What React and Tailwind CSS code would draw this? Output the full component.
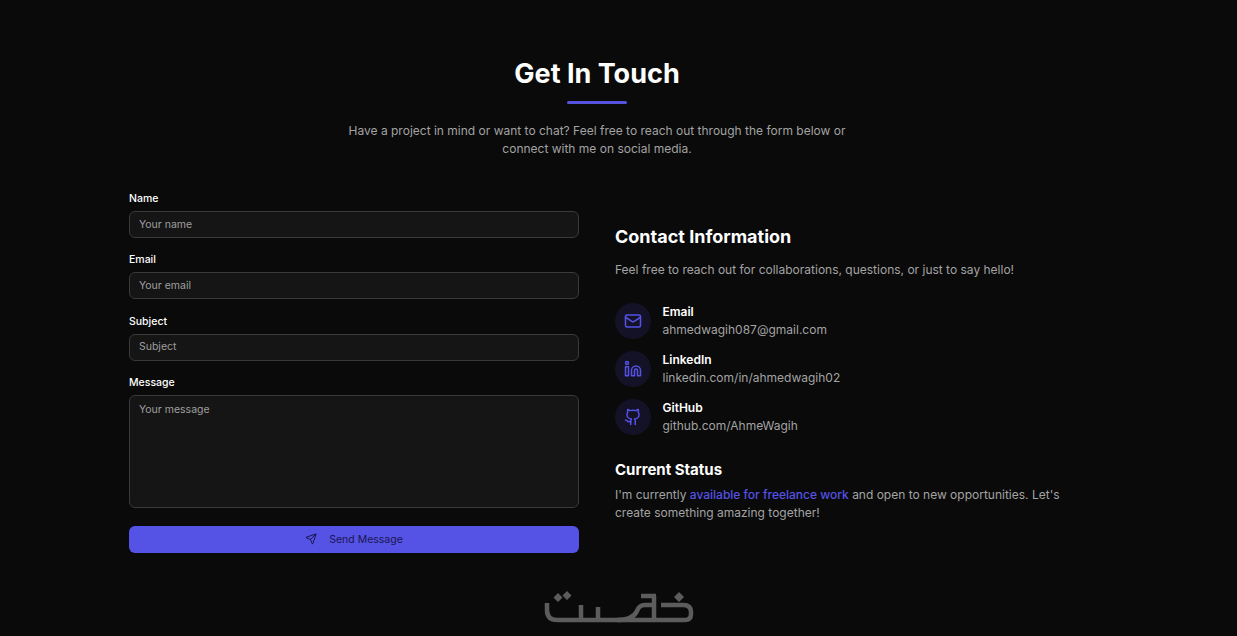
import React from 'react';
import { Mail, Linkedin, Github, Send } from 'lucide-react';

const fields = [
  { label: 'Name', placeholder: 'Your name' },
  { label: 'Email', placeholder: 'Your email' },
  { label: 'Subject', placeholder: 'Subject' },
];

const contacts = [
  { title: 'Email', value: 'ahmedwagih087@gmail.com', Icon: Mail },
  { title: 'LinkedIn', value: 'linkedin.com/in/ahmedwagih02', Icon: Linkedin },
  { title: 'GitHub', value: 'github.com/AhmeWagih', Icon: Github },
];

// khamsat watermark
const Logo = () => (
  <svg width="152" height="34" viewBox="542 590 152 34" fill="none" stroke="#5c5c5c" strokeWidth="4.5">
    <path d="M546 603v7q0 10 10 10H684q6 0 6-6v-2q0-7-8-7H660" />
    <path d="M580 605v15M597 607v13" />
    <path d="M616 620q16 0 20-9q2-6 8-6h9" />
    <path d="M640 596h15M653 596v24" />
    <path d="M678 592l5 5-5 5-5-5z M557 593l4.500 4.500-4.500 4.500-4.500-4.500z M566 591l4.500 4.500-4.500 4.500-4.500-4.500z" fill="#5c5c5c" stroke="none" />
  </svg>
);

export default function App() {
  return (
    <div className="h-[636px] overflow-hidden bg-[#0a0a0a] font-['Inter',sans-serif] text-white">
      <div className="ml-[129px] w-[936px] pt-[56px]">
        <div className="flex flex-col items-center">
          <h2 className="text-[27px] leading-[36px] font-bold">Get In Touch</h2>
          <div className="mt-[9px] h-[3px] w-[60px] rounded-full bg-[#5552e0]"></div>
          <p className="mt-[18px] w-[510px] text-center text-[12px] leading-[18px] text-[#a3a3a3]">
            Have a project in mind or want to chat? Feel free to reach out through the form below or connect with me on social media.
          </p>
        </div>

        <div className="mt-[33px] flex items-start gap-[36px]">
          <form className="flex w-[450px] flex-col gap-[14.33px]">
            {fields.map((f) => (
              <div key={f.label} className="flex flex-col gap-[4px]">
                <label className="text-[10.500px] leading-[16px] font-medium">{f.label}</label>
                <div className="flex h-[27px] items-center rounded-md border border-[#3a3a3a] bg-[#151515] px-[9px] text-[10.500px] text-[#9f9f9f]">
                  {f.placeholder}
                </div>
              </div>
            ))}
            <div className="flex flex-col gap-[4px]">
              <label className="text-[10.500px] leading-[16px] font-medium">Message</label>
              <div className="h-[113px] rounded-md border border-[#3a3a3a] bg-[#151515] px-[9px] py-[6px] text-[10.500px] leading-[16px] text-[#9f9f9f]">
                Your message
              </div>
            </div>
            <button type="button" className="mt-[3.67px] flex h-[27px] items-center justify-center gap-[12px] rounded-md bg-[#5552e6] text-[10.500px] font-normal text-[#1a1650]">
              <Send size={12} />
              Send Message
            </button>
          </form>

          <div className="w-[450px] pt-[34px]">
            <h3 className="text-[18px] leading-[24px] font-bold">Contact Information</h3>
            <p className="mt-[12px] text-[12px] leading-[18px] text-[#a3a3a3]">
              Feel free to reach out for collaborations, questions, or just to say hello!
            </p>
            <div className="mt-[24px] flex flex-col gap-[12px]">
              {contacts.map(({ title, value, Icon }) => (
                <div key={title} className="flex items-center gap-[11.5px]">
                  <div className="flex h-[36px] w-[36px] items-center justify-center rounded-full bg-[#131227] text-[#5552e6]">
                    <Icon size={18} />
                  </div>
                  <div>
                    <div className="text-[12px] leading-[18px] font-semibold">{title}</div>
                    <div className="text-[12px] leading-[18px] text-[#a3a3a3]">{value}</div>
                  </div>
                </div>
              ))}
            </div>
            <h3 className="mt-[24px] text-[15px] leading-[22px] font-bold">Current Status</h3>
            <p className="mt-[5px] w-[450px] text-[12px] leading-[18px] text-[#a3a3a3]">
              I'm currently <span className="font-medium text-[#5552e6]">available for freelance work</span> and open to new opportunities. Let's create something amazing together!
            </p>
          </div>
        </div>
      </div>
      <div className="mt-[37px] flex justify-center">
        <Logo />
      </div>
    </div>
  );
}
